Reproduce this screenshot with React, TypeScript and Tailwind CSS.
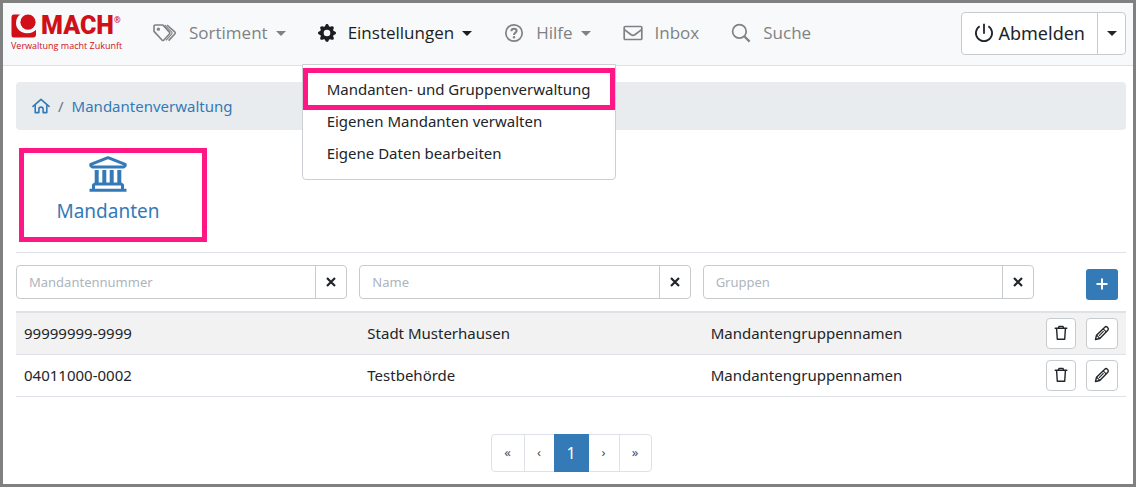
import type { ReactNode } from "react";
import { BsGearFill } from "react-icons/bs";

const rows = [
  { number: "99999999-9999", name: "Stadt Musterhausen", groups: "Mandantengruppennamen" },
  { number: "04011000-0002", name: "Testbehörde", groups: "Mandantengruppennamen" },
];

const filters = ["Mandantennummer", "Name", "Gruppen"];

function Caret() {
  return <span className="border-x-5 border-t-5 border-x-transparent border-t-current" />;
}

function TagsIcon() {
  return (
    <svg viewBox="0 0 24 20" className="h-5 w-6" fill="none" stroke="currentColor" strokeWidth="1.6" strokeLinejoin="round">
      <path d="M1 3 V8.4 L9.2 17.2 a1 1 0 0 0 1.5 0 L16.6 10.8 a1 1 0 0 0 0-1.4 L9.8 2 H2.2 a1.2 1.2 0 0 0-1.2 1z" />
      <path d="M14 2 L22 9.2 a1.2 1.2 0 0 1 0 1.6 L15.6 17.6" />
      <path d="M11.6 2 L18.8 9.2 a1.2 1.2 0 0 1 0 1.6 L13 17.4" strokeWidth="1.1" />
      <circle cx="5.4" cy="6.2" r="1.6" fill="currentColor" stroke="none" />
    </svg>
  );
}

function QuestionIcon() {
  return (
    <svg viewBox="0 0 20 20" className="size-5" fill="none" stroke="currentColor" strokeWidth="1.7">
      <circle cx="10" cy="10" r="8.2" />
      <path d="M7.4 8.2 C7.4 6.6 8.5 5.8 10 5.8 C11.6 5.8 12.6 6.7 12.6 8 C12.6 9.6 10 9.8 10 11.9" strokeWidth="2" />
      <circle cx="10" cy="14.2" r="1.2" fill="currentColor" stroke="none" />
    </svg>
  );
}

function EnvelopeIcon() {
  return (
    <svg viewBox="0 0 20 16" className="h-4 w-5" fill="none" stroke="currentColor" strokeWidth="1.7" strokeLinejoin="round">
      <rect x="1.2" y="1.5" width="17.6" height="13" rx="1" />
      <path d="M1.4 4.6 L8.2 9.8 Q10 11 11.8 9.8 L18.6 4.6" />
    </svg>
  );
}

function SearchIcon() {
  return (
    <svg viewBox="0 0 20 20" className="size-5" fill="none" stroke="currentColor" strokeWidth="1.7">
      <circle cx="8.4" cy="8.4" r="6.8" />
      <path d="M13 13 L18.6 18.6" strokeWidth="2.2" />
    </svg>
  );
}

function PowerIcon() {
  return (
    <svg viewBox="0 0 20 20" className="size-5" fill="none" stroke="currentColor" strokeWidth="1.8">
      <path d="M5.6 3.2 A8.1 8.1 0 1 0 14.4 3.2 M10 0.8 V10.8" />
    </svg>
  );
}

function HomeIcon() {
  return (
    <svg viewBox="0 0 18 16" className="h-4 w-[18px]" fill="none" stroke="currentColor" strokeWidth="1.6" strokeLinejoin="round" strokeLinecap="round">
      <path d="M1 8.4 L9 1.4 L17 8.4" />
      <path d="M3.2 7.4 V14.6 H6.9 V11.2 a2.1 2.1 0 0 1 4.2 0 V14.6 H14.8 V7.4" />
    </svg>
  );
}

function BankIcon() {
  return (
    <svg viewBox="0 0 38 36" className="h-9 w-[38px]" fill="none" stroke="currentColor" strokeWidth="3" strokeLinejoin="round">
      <path d="M1.8 8.3 L19 1.7 L36.2 8.3 V9.6 L34.8 11 H3.2 L1.8 9.6z" />
      <path d="M7.7 14 V28 M15.3 14 V28 M22.7 14 V28 M30.3 14 V28" strokeWidth="4" />
      <path d="M4.5 34 V29 L6 28 H32 L33.5 29 V34" />
      <path d="M0.5 34.3 H37.5" />
    </svg>
  );
}

function TrashIcon() {
  return (
    <svg viewBox="0 0 14 16" className="h-4 w-3.5" fill="none" stroke="currentColor" strokeWidth="1.4" strokeLinejoin="round" strokeLinecap="round">
      <path d="M1.2 3.3 H12.8 M4.3 3 L5.1 1.4 H8.9 L9.7 3 M2.6 3.6 L3.3 14.3 H10.7 L11.4 3.6" />
    </svg>
  );
}

function PencilIcon() {
  return (
    <svg viewBox="0 0 16 16" className="size-4" fill="none" stroke="currentColor" strokeWidth="1.4" strokeLinejoin="round">
      <path d="M1.5 14.5 L2.5 10.2 L10.8 2.2 a1.8 1.8 0 0 1 2.5 0 L13.8 2.7 a1.8 1.8 0 0 1 0 2.5 L5.8 13.5z" />
      <path d="M9.2 3.8 L12.2 6.8 M2.6 10.2 L5.8 13.4 M5 10.8 L9.6 6.2" strokeWidth="1.1" />
    </svg>
  );
}

function Logo() {
  return (
    <a href="#" aria-label="MACH" className="flex w-[110px] flex-col text-[#cf1019]">
      <span className="flex items-center">
        <svg viewBox="0 0 26 24" className="h-6 w-[26px] shrink-0">
          <path d="M2.5 0.5 H23 V12 H25 V20.5 A3 3 0 0 1 22 23.5 H3 A2.5 2.5 0 0 1 0.5 21 V3 Q0.5 0.5 2.5 0.5z" fill="currentColor" />
          <path d="M9.5 0 H26 V14.5 C24 17.6 20 19.4 16 19.2 C9 19 5 14.5 5 9 C5 5 6.8 2 9.5 0z" fill="#f8f9fa" />
          <circle cx="17" cy="8.2" r="7.6" fill="currentColor" />
        </svg>
        <span className="ml-1 font-[Roboto] text-[25px] leading-6 font-black">MACH</span>
        <span className="self-start text-[8px] leading-3 font-bold">®</span>
      </span>
      <span className="mt-0.5 font-['Open_Sans'] text-[9px] leading-3 font-medium whitespace-nowrap">Verwaltung macht Zukunft</span>
    </a>
  );
}

type NavItemProps = { icon: ReactNode; label: string; caret?: boolean; active?: boolean };

function NavItem({ icon, label, caret, active }: NavItemProps) {
  return (
    <a href="#" className={active ? "flex items-center text-[#1b1e21]" : "flex items-center text-[#7f8284]"}>
      {icon}
      <span className="ml-3 font-['Open_Sans'] text-[17px] leading-7">{label}</span>
      {caret && <span className="ml-2 flex"><Caret /></span>}
    </a>
  );
}

export default function App() {
  return (
    <div className="min-h-screen border-3 border-[#808080] bg-white font-['Noto_Sans',sans-serif] text-[#212529]">
      <header className="flex h-[63px] items-center border-b border-[#dee2e6] bg-[#f8f9fa] pr-[7px] pb-0.5 pl-2">
        <Logo />
        <nav className="ml-8 flex items-center gap-8">
          <NavItem icon={<TagsIcon />} label="Sortiment" caret />
          <div className="relative">
            <NavItem icon={<BsGearFill className="size-[18px]" />} label="Einstellungen" caret active />
            <ul className="absolute top-[45px] -left-4 z-10 w-[314px] rounded-b border border-[#ccd0d4] bg-white pt-2 pb-2.5 text-[15px] leading-8">
              <li className="relative">
                <a href="#" className="block px-6">Mandanten- und Gruppenverwaltung</a>
                <span className="pointer-events-none absolute inset-x-0 -inset-y-[5px] border-5 border-[#ff1785]" />
              </li>
              <li><a href="#" className="block px-6">Eigenen Mandanten verwalten</a></li>
              <li><a href="#" className="block px-6">Eigene Daten bearbeiten</a></li>
            </ul>
          </div>
          <NavItem icon={<QuestionIcon />} label="Hilfe" caret />
          <NavItem icon={<EnvelopeIcon />} label="Inbox" />
          <NavItem icon={<SearchIcon />} label="Suche" />
        </nav>
        <div className="ml-auto flex h-[43px] rounded border border-[#c8cbce] bg-white">
          <button className="flex items-center gap-1 px-3 text-lg"><PowerIcon />Abmelden</button>
          <button aria-label="Menü" className="flex w-7 items-center justify-center border-l border-[#c8cbce]"><Caret /></button>
        </div>
      </header>

      <main className="pt-4 pr-[7px] pb-3 pl-[13px]">
        <nav className="flex h-12 items-center rounded bg-[#e9ecef] px-4 text-[15px] text-[#337ab7]">
          <a href="#" aria-label="Startseite"><HomeIcon /></a>
          <span className="mx-2 text-[#6c757d]">/</span>
          <a href="#">Mandantenverwaltung</a>
        </nav>

        <a href="#" className="mt-[18px] ml-[3px] flex h-[94px] w-[188px] flex-col items-center border-5 border-[#ff1785] pt-[3px] pr-2.5 text-[19px] leading-7 text-[#337ab7]">
          <BankIcon />
          <span className="mt-[5px]">Mandanten</span>
        </a>

        <table className="mt-2.5 w-full table-fixed border-collapse border-t border-[#dee2e6] text-left text-[15px]">
          <colgroup>
            <col />
            <col />
            <col />
            <col className="w-20" />
          </colgroup>
          <thead>
            <tr className="border-b-2 border-[#dee2e6]">
              {filters.map((label) => (
                <th key={label} className="pt-3 pr-3 pb-3 font-normal">
                  <div className="flex h-[34px] rounded border border-[#c8cbce] bg-white">
                    <input aria-label={label} placeholder={label} className="min-w-0 flex-1 px-3 pt-0.5 text-[13px] placeholder:text-[#adb5bd]" />
                    <button aria-label={label + " leeren"} className="flex w-[31px] items-center justify-center border-l border-[#c8cbce]">
                      <svg viewBox="0 0 10 10" className="size-2.5" stroke="currentColor" strokeWidth="2.2"><path d="M1 1 L9 9 M9 1 L1 9" /></svg>
                    </button>
                  </div>
                </th>
              ))}
              <th className="pt-3.5 pr-2 pb-2.5">
                <button aria-label="Hinzufügen" className="ml-auto flex h-[31px] w-8 items-center justify-center rounded-[3px] bg-[#337ab7] text-white">
                  <svg viewBox="0 0 12 12" className="size-3" stroke="currentColor" strokeWidth="2"><path d="M6 0.5 V11.5 M0.5 6 H11.5" /></svg>
                </button>
              </th>
            </tr>
          </thead>
          <tbody>
            {rows.map((row) => (
              <tr key={row.number} className="h-[42px] border-b border-[#dee2e6] odd:bg-[#f2f2f2]">
                <td className="pl-2">{row.number}</td>
                <td className="pl-2">{row.name}</td>
                <td className="pl-2">{row.groups}</td>
                <td className="pr-2">
                  <div className="flex justify-end gap-2.5">
                    <button aria-label="Löschen" className="flex h-[31px] w-[30px] items-center justify-center rounded border border-[#c8cbce] bg-white"><TrashIcon /></button>
                    <button aria-label="Bearbeiten" className="flex h-[31px] w-8 items-center justify-center rounded border border-[#c8cbce] bg-white"><PencilIcon /></button>
                  </div>
                </td>
              </tr>
            ))}
          </tbody>
        </table>

        <nav aria-label="Seiten" className="mx-auto mt-[37px] flex h-[38px] w-max rounded border border-[#dee2e6] text-[13px] text-[#495057]">
          <button className="w-8">«</button>
          <button className="w-[30px] border-l border-[#dee2e6]">‹</button>
          <button aria-current="page" className="-my-px w-[35px] bg-[#337ab7] text-base text-white">1</button>
          <button className="w-[30px]">›</button>
          <button className="w-8 border-l border-[#dee2e6]">»</button>
        </nav>
      </main>
    </div>
  );
}
